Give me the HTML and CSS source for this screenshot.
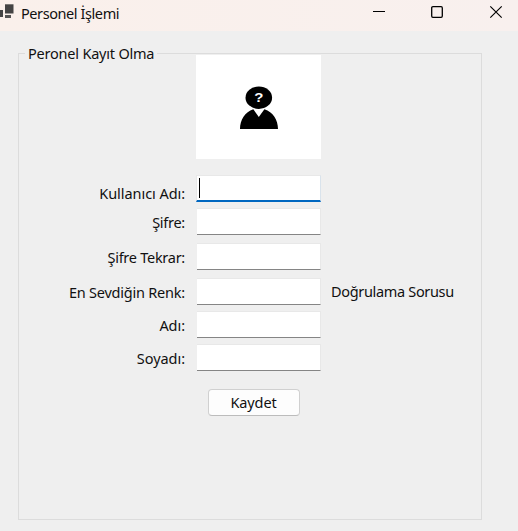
FILE: index.html
```html
<!DOCTYPE html>
<html lang="tr">
<head>
<meta charset="utf-8">
<title>Personel İşlemi</title>
<link rel="stylesheet" href="styles.css">
</head>
<body>
<header class="titlebar">
  <svg class="app-icon" width="14" height="20" viewBox="0 0 14 20">
    <path fill="#444" d="M0 10h3v7H0z"/>
    <path fill="#444" d="M5 4.300h8.500v9.200H5z"/>
    <path fill="#555" d="M5 15h6v3H5z"/>
  </svg>
  <h1 class="title">Personel İşlemi</h1>
  <svg class="controls" width="124" height="14" viewBox="0 0 124 14" fill="none" stroke="#000">
    <path d="M0 6.500h12"/>
    <rect x="58.700" y="1.700" width="10.600" height="10.600" rx="1.200" stroke-width="1.300"/>
    <path d="M117.300 1.300l11.400 11.400M128.700 1.300l-11.400 11.400" stroke-width="1.150"/>
  </svg>
</header>
<main class="client">
  <fieldset class="group">
    <legend class="legend">Peronel Kayıt Olma</legend>
    <div class="picture">
      <svg width="38" height="44" viewBox="0 0 38 44">
        <ellipse cx="18.800" cy="11.700" rx="13.300" ry="11.200"/>
        <path d="M0 43c0-9 5-17 13.300-19.800L18.800 31l5.600-7.800C33 26 38 34 38 43z"/>
        <text class="mark" transform="translate(18.8 16.3) scale(1.15 1)" text-anchor="middle">?</text>
      </svg>
    </div>
    <div class="form">
      <div class="label user">Kullanıcı Adı:</div><div class="field focused"><span class="caret"></span></div>
      <div class="label pass">Şifre:</div><div class="field"></div>
      <div class="label repeat">Şifre Tekrar:</div><div class="field"></div>
      <div class="label color">En Sevdiğin Renk:</div><div class="field"></div><div class="hint">Doğrulama Sorusu</div>
      <div class="label name">Adı:</div><div class="field"></div>
      <div class="label surname">Soyadı:</div><div class="field"></div>
      <button class="save">Kaydet</button>
    </div>
  </fieldset>
</main>
</body>
</html>
```
FILE: styles.css
```css
* { box-sizing: border-box; }
body {
  margin: 0;
  height: 531px;
  overflow: hidden;
  background: #efefef;
  color: #111;
  font: 14.5px "Noto Sans", sans-serif;
  white-space: nowrap;
}
.titlebar {
  display: flex;
  height: 31px;
  background: linear-gradient(90deg, #faf0eb, #f8f0ee);
}
.app-icon { flex: none; }
.title {
  margin: 0 0 0 6px;
  padding-left: 1px;
  width: 353px;
  font-size: 14.5px;
  font-weight: 400;
  line-height: 26px;
  letter-spacing: -0.42px;
}
.controls { flex: none; margin-top: 5px; overflow: visible; }
.client { padding: 22px 36px 0 18px; }
.group {
  position: relative;
  margin: 0;
  padding: 2px 0 0;
  height: 467px;
  border: 1px solid #dcdcdc;
}
.legend {
  position: absolute;
  top: -13px;
  left: 6px;
  width: 132px;
  padding: 0 0 0 3px;
  background: #efefef;
  line-height: 24px;
  letter-spacing: -0.21px;
}
.picture {
  display: flex;
  justify-content: center;
  margin: -1px 0 16px 177px;
  padding-top: 31px;
  width: 125px;
  height: 104px;
  background: #fff;
}
.mark { fill: #fff; font: bold 13px "Liberation Sans", sans-serif; }
.form {
  display: grid;
  grid-template-columns: 166px 125px 1fr;
  grid-template-rows: 33px 35px 35px 33px 33px 45px 27px;
  column-gap: 11px;
}
.label { grid-column: 1; text-align: right; line-height: 29px; }
.user { padding-top: 4px; letter-spacing: -0.06px; }
.pass, .repeat { letter-spacing: -0.27px; }
.color { letter-spacing: -0.22px; }
.name, .surname { letter-spacing: -0.05px; }
.field {
  grid-column: 2;
  margin-left: 1px;
  width: 124px;
  height: 27px;
  background: #fff;
  border: 1px solid #e8e8e8;
  border-left-width: 0;
  border-bottom-color: #858585;
}
.focused {
  margin-left: 0;
  width: 125px;
  padding: 2px 0 0 3px;
  border-left: 1px solid #e8e8e8;
  border-right-color: #d9e3ec;
  border-bottom: 2px solid #0067c0;
}
.caret { display: block; width: 1px; height: 20px; margin-left: -1px; background: #000; }
.hint { grid-column: 3; margin-left: -1px; line-height: 27px; letter-spacing: -0.33px; }
.save {
  grid-column: 2;
  margin-left: 12px;
  padding: 0 1px 0 0;
  width: 92px;
  height: 27px;
  border: 1px solid #d0d0d0;
  border-bottom-color: #bcbcbc;
  border-radius: 4px;
  background: #fdfdfd;
  color: #111;
  font: inherit;
  line-height: 25px;
  letter-spacing: -0.1px;
}
```
